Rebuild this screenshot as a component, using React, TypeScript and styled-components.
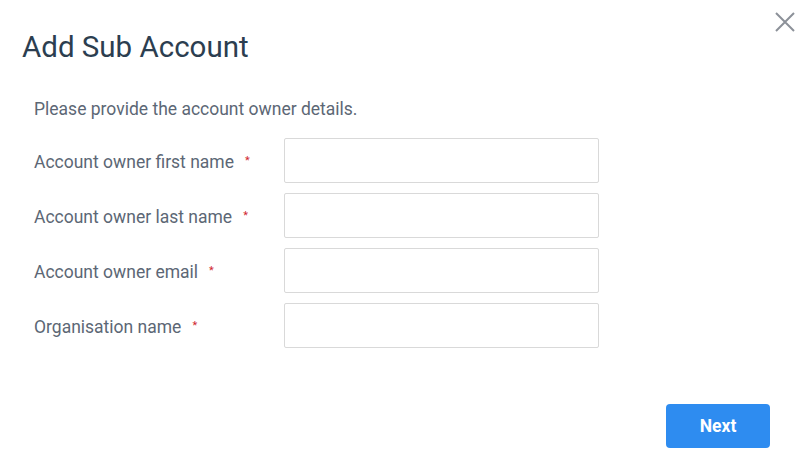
import styled, { createGlobalStyle } from "styled-components";

const GlobalStyle = createGlobalStyle`
  html, body {
    margin: 0;
    padding: 0;
    background: #fff;
  }
  body {
    font-family: Roboto, "Liberation Sans", sans-serif;
  }
`;

const Dialog = styled.div`
  width: 807px;
  height: 467px;
  box-sizing: border-box;
  display: flex;
  flex-direction: column;
  background: #fff;
`;

const Header = styled.div`
  display: flex;
  justify-content: space-between;
  align-items: flex-start;
  padding: 12px 12px 0 22px;
`;

const Title = styled.h1`
  margin: 18px 0 0;
  font-size: 29.5px;
  font-weight: 400;
  line-height: 34px;
  color: #2c3e50;
`;

const CloseButton = styled.button`
  border: none;
  background: none;
  padding: 0;
  width: 20px;
  height: 20px;
  cursor: pointer;
  display: flex;
`;

const Body = styled.div`
  padding: 0 34px;
  margin-top: 34px;
`;

const Intro = styled.p`
  margin: 0 0 18px;
  font-size: 17.5px;
  line-height: 22px;
  color: #5c6775;
`;

const Fields = styled.div`
  display: flex;
  flex-direction: column;
  gap: 10px;
`;

const Row = styled.div`
  display: grid;
  grid-template-columns: 250px 315px;
  align-items: center;
`;

const Label = styled.label`
  display: flex;
  align-items: center;
  font-size: 17.5px;
  color: #5c6775;
  padding-top: 2px;
`;

const Required = styled.span`
  color: #d0262f;
  font-size: 11px;
  margin-left: 11px;
  position: relative;
  top: -1px;
`;

const Input = styled.input`
  box-sizing: border-box;
  width: 315px;
  height: 45px;
  border: 1px solid #d9d9d9;
  border-radius: 2px;
  padding: 0 10px;
  font-size: 15px;
  font-family: inherit;
  outline: none;
`;

const Footer = styled.div`
  margin-top: auto;
  display: flex;
  justify-content: flex-end;
  padding: 0 37px 19px;
`;

const PrimaryButton = styled.button`
  width: 104px;
  height: 44px;
  border: none;
  border-radius: 4px;
  background: #2e8cf0;
  color: #fff;
  font-family: inherit;
  font-size: 17.5px;
  font-weight: 700;
  cursor: pointer;
`;

const fields = [
  "Account owner first name",
  "Account owner last name",
  "Account owner email",
  "Organisation name",
];

const App = () => (
  <>
    <GlobalStyle />
    <Dialog>
      <Header>
        <Title>Add Sub Account</Title>
        <CloseButton aria-label="Close">
          <svg width="20" height="20" viewBox="0 0 20 20">
            <path d="M1 1L19 19M19 1L1 19" stroke="#8c9199" strokeWidth="2" />
          </svg>
        </CloseButton>
      </Header>
      <Body>
        <Intro>Please provide the account owner details.</Intro>
        <Fields>
          {fields.map(f => (
            <Row key={f}>
              <Label>
                {f}
                <Required>*</Required>
              </Label>
              <Input type="text" />
            </Row>
          ))}
        </Fields>
      </Body>
      <Footer>
        <PrimaryButton>Next</PrimaryButton>
      </Footer>
    </Dialog>
  </>
);

export default App;
